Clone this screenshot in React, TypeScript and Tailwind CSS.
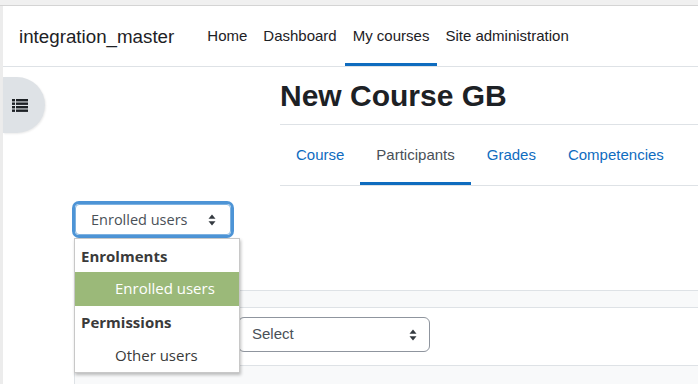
const navLinks = [
  { label: "Home", active: false },
  { label: "Dashboard", active: false },
  { label: "My courses", active: true },
  { label: "Site administration", active: false },
];

const tabs = [
  { label: "Course", active: false },
  { label: "Participants", active: true },
  { label: "Grades", active: false },
  { label: "Competencies", active: false },
];

function Carets({ className }: { className?: string }) {
  return (
    <svg className={className} width="8" height="12" viewBox="0 0 8 12" fill="#343a40">
      <path d="M4 0.5 L7.5 4.8 L0.5 4.8 Z" />
      <path d="M4 11.5 L7.5 7.2 L0.5 7.2 Z" />
    </svg>
  );
}

function ListIcon() {
  return (
    <svg width="16" height="13" viewBox="0 0 16 13" fill="#1d2125">
      <rect x="0" y="0" width="3" height="2.4" />
      <rect x="4" y="0" width="12" height="2.4" />
      <rect x="0" y="3.5" width="3" height="2.4" />
      <rect x="4" y="3.5" width="12" height="2.4" />
      <rect x="0" y="7" width="3" height="2.4" />
      <rect x="4" y="7" width="12" height="2.4" />
      <rect x="0" y="10.5" width="3" height="2.4" />
      <rect x="4" y="10.5" width="12" height="2.4" />
    </svg>
  );
}

export default function App() {
  return (
    <div className="relative h-[384px] w-[698px] overflow-hidden bg-white font-['Liberation_Sans',Arial,sans-serif] text-[#1d2125]">
      <div className="h-[6px] border-b border-[#d4d4d4] bg-[#f0f0f0]" />
      <div className="flex h-[378px]">
        <div className="w-[3px] shrink-0 bg-[#ececec]" />
        <div className="relative flex-1">
          <nav className="flex h-[61px] items-center border-b border-[#dee2e6]">
            <span className="ml-[16px] pt-[2px] text-[18.75px] leading-none">integration_master</span>
            <div className="ml-[25px] flex h-full items-stretch">
              {navLinks.map((link) => (
                <span
                  className={`flex items-center border-b-[3px] px-2 pt-[3px] text-[15px] ${link.active ? "border-[#0f6cbf]" : "border-transparent"}`}
                  key={link.label}
                >
                  {link.label}
                </span>
              ))}
            </div>
          </nav>

          <button className="absolute left-0 top-[71px] flex h-[56px] w-[42px] items-center justify-center rounded-r-[28px] bg-[#dee2e6] pr-[8px] shadow-[1px_1px_2px_rgba(0,0,0,0.08)]">
            <ListIcon />
          </button>

          <div className="ml-[277px]">
            <h2 className="pt-[11px] text-[30px] font-bold leading-[36px]">New Course GB</h2>
            <div className="mt-[10px] flex h-[62px] border-y border-[#dee2e6]">
              {tabs.map((tab) => (
                <span
                  className={`flex items-center border-b-[3px] px-4 pt-[3px] text-[15px] ${tab.active ? "border-[#0f6cbf] text-[#495057]" : "border-transparent text-[#0f6cbf]"}`}
                  key={tab.label}
                >
                  {tab.label}
                </span>
              ))}
            </div>
          </div>

          <div className="ml-[72px] mt-[18px] flex h-[31px] w-[156px] items-center justify-between rounded-[4px] border border-[#7fb2e0] pl-[15px] pr-[14px] font-['Open_Sans',sans-serif] text-[14.5px] text-[#495057] shadow-[0_0_0_3px_rgba(46,129,207,0.85)]">
            <span>Enrolled users</span>
            <Carets />
          </div>

          <div className="ml-[71px] mt-[55px] border-l border-[#dee2e6]">
            <div className="h-[18px] border-y border-[#dee2e6] bg-[#f8f9fa]" />
            <div className="flex h-[58px] items-start border-b border-[#dee2e6] pl-[163px] pt-[9px]">
              <div className="flex h-[35px] w-[192px] items-center justify-between rounded-[6px] border border-[#8f959e] pl-[13px] pr-[12px] text-[15px] text-[#495057]">
                <span>Select</span>
                <Carets />
              </div>
            </div>
            <div className="h-[40px] bg-[#f8f9fa]" />
          </div>

          <div className="absolute left-[71px] top-[232px] w-[166px] border border-[#c8c8c8] bg-white font-['Open_Sans',sans-serif] text-[15px] text-[#3a3a3a] shadow-[1px_2px_3px_rgba(0,0,0,0.25)]">
            <div className="flex h-[33px] items-center pl-[6px] pt-[1px] font-bold">Enrolments</div>
            <div className="flex h-[34px] items-center bg-[#9bb979] pb-[1px] pl-[40px] text-white">Enrolled users</div>
            <div className="flex h-[33px] items-center pb-[1px] pl-[6px] font-bold">Permissions</div>
            <div className="flex h-[33px] items-center pl-[40px]">Other users</div>
          </div>
        </div>
      </div>
    </div>
  );
}
